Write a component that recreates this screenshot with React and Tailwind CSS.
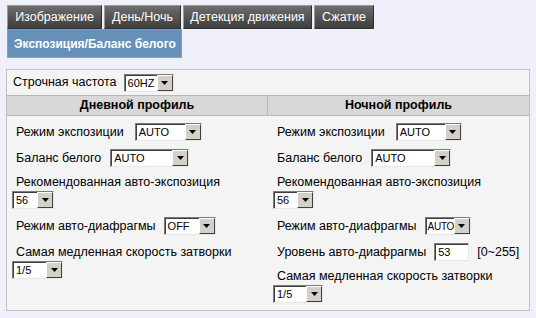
import React from "react";

function Select({ value, w, tight = false }) {
  return (
    <div
      className="flex h-[18px] shrink-0 border border-t-[#7a7a7a] border-l-[#7a7a7a] border-b-[#e8e8e8] border-r-[#e8e8e8] bg-white"
      style={{ width: w }}
    >
      <div
        className={
          "flex min-w-0 flex-1 items-center overflow-hidden whitespace-nowrap border-t border-l border-t-[#404040] border-l-[#404040] leading-none text-black " +
          (tight ? "pl-[1px] text-[10px] tracking-[-0.3px]" : "pl-[2px] text-[11px]")
        }
      >
        {value}
      </div>
      <div className="flex w-[16px] shrink-0 items-center justify-center border border-t-white border-l-white border-b-[#404040] border-r-[#404040] bg-[#d4d0c8]">
        <svg width="7" height="4" viewBox="0 0 7 4">
          <polygon points="0,0 7,0 3.5,4" fill="#000" />
        </svg>
      </div>
    </div>
  );
}

function Row({ label, children, className = "" }) {
  return (
    <div className={"flex h-[26px] items-center " + className}>
      <span className="whitespace-nowrap pl-[4px]">{label}</span>
      {children}
    </div>
  );
}

function Block({ label, children, className = "" }) {
  return (
    <div className={"flex flex-col " + className}>
      <div className="h-[18px] whitespace-nowrap pl-[4px] leading-[18px]">{label}</div>
      <div className="flex">{children}</div>
    </div>
  );
}

export default function App() {
  const tab =
    "flex h-[24px] items-center justify-center border border-t-[#9a9a9a] border-l-[#9a9a9a] border-r-[#2e2e2e] border-b-[#2e2e2e] bg-gradient-to-b from-[#6e6e6e] to-[#3e3e3e] text-[12.5px] text-white";
  return (
    <div
      className="min-h-[318px] w-[536px] bg-[#f0f0fa] text-[12.5px] text-black"
      style={{ fontFamily: '"Liberation Sans", Arial, sans-serif' }}
    >
      <div className="flex gap-[2px] pl-[7px] pt-[5px]">
        <div className={tab + " w-[95px]"}>Изображение</div>
        <div className={tab + " w-[77px]"}>День/Ночь</div>
        <div className={tab + " w-[129px]"}>Детекция движения</div>
        <div className={tab + " w-[60px]"}>Сжатие</div>
      </div>
      <div className="pl-[7px]">
        <div className="flex h-[29px] w-[175px] items-center border border-[#7f9fc2] bg-[#6690b8] pl-[6px] text-[12px] font-bold text-white">
          Экспозиция/Баланс белого
        </div>
      </div>
      <div className="ml-[6px] mt-[11px] w-[524px] border border-[#c0c0c0] bg-[#f4f4f4]">
        <div className="flex h-[25px] items-center pl-[6px]">
          <span>Строчная частота</span>
          <div className="ml-[7px]">
            <Select value="60HZ" w={50} />
          </div>
        </div>
        <div className="grid h-[21px] grid-cols-2 border-y border-[#b8b8b8] bg-[#d8d8d8] font-bold">
          <div className="flex items-center justify-center border-r border-[#b8b8b8]">
            Дневной профиль
          </div>
          <div className="flex items-center justify-center">Ночной профиль</div>
        </div>
        <div className="grid grid-cols-2 pb-[7px]">
          <div className="flex flex-col pl-[5px] pt-[3px]">
            <Row label="Режим экспозиции">
              <div className="ml-[11px]">
                <Select value="AUTO" w={67} />
              </div>
            </Row>
            <Row label="Баланс белого">
              <div className="ml-[9px]">
                <Select value="AUTO" w={79} />
              </div>
            </Row>
            <Block label="Рекомендованная авто-экспозиция" className="mt-[2px]">
              <Select value="56" w={42} />
            </Block>
            <Row label="Режим авто-диафрагмы" className="mt-[4px]">
              <div className="ml-[8px]">
                <Select value="OFF" w={52} />
              </div>
            </Row>
            <Block label="Самая медленная скорость затворки" className="mt-[4px]">
              <Select value="1/5" w={51} />
            </Block>
          </div>
          <div className="flex flex-col pl-[5px] pt-[3px]">
            <Row label="Режим экспозиции">
              <div className="ml-[11px]">
                <Select value="AUTO" w={66} />
              </div>
            </Row>
            <Row label="Баланс белого">
              <div className="ml-[9px]">
                <Select value="AUTO" w={80} />
              </div>
            </Row>
            <Block label="Рекомендованная авто-экспозиция" className="mt-[2px]">
              <Select value="56" w={41} />
            </Block>
            <Row label="Режим авто-диафрагмы" className="mt-[4px]">
              <div className="ml-[8px]">
                <Select value="AUTO" w={46} tight />
              </div>
            </Row>
            <Row label="Уровень авто-диафрагмы">
              <div className="ml-[8px] flex h-[18px] w-[35px] border border-t-[#7a7a7a] border-l-[#7a7a7a] border-b-[#e8e8e8] border-r-[#e8e8e8] bg-white">
                <div className="flex flex-1 items-center border-t border-l border-t-[#404040] border-l-[#404040] pl-[2px] text-[11px] leading-none">
                  53
                </div>
              </div>
              <span className="ml-[8px]">[0~255]</span>
            </Row>
            <Block label="Самая медленная скорость затворки" className="mt-[2px]">
              <Select value="1/5" w={50} />
            </Block>
          </div>
        </div>
      </div>
    </div>
  );
}
